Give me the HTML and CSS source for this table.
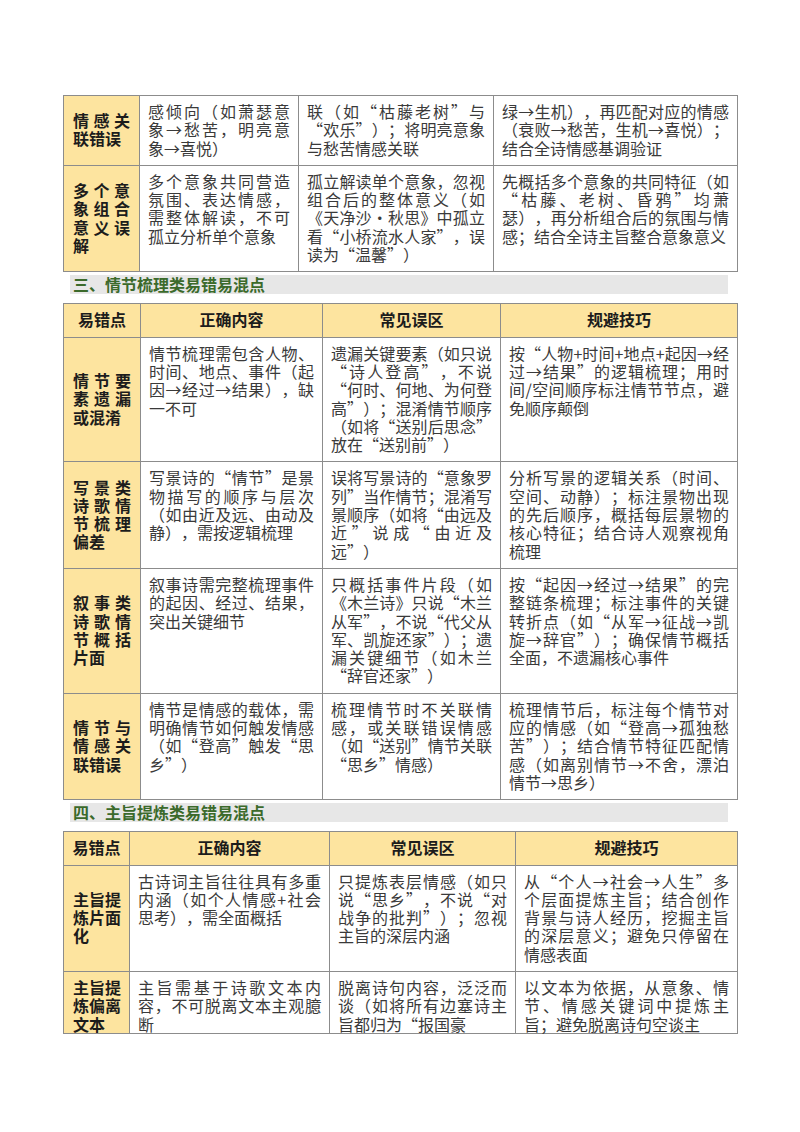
FILE: index.html
```html
<!DOCTYPE html>
<html lang="zh-CN">
<head>
<meta charset="utf-8">
<title>易错易混点</title>
<link rel="stylesheet" href="styles.css">
</head>
<body>
<div class="page">
  <table class="grid t1">
    <colgroup><col class="a"><col class="b"><col class="c"><col class="d"></colgroup>
    <tr class="r1">
      <th class="key">情感关联错误</th>
      <td>感倾向（如萧瑟意象→愁苦，明亮意象→喜悦）</td>
      <td>联（如“枯藤老树”与“欢乐”）；将明亮意象与愁苦情感关联</td>
      <td>绿→生机），再匹配对应的情感（衰败→愁苦，生机→喜悦）；结合全诗情感基调验证</td>
    </tr>
    <tr>
      <th class="key">多个意象组合意义误解</th>
      <td>多个意象共同营造氛围、表达情感，需整体解读，不可孤立分析单个意象</td>
      <td>孤立解读单个意象，忽视组合后的整体意义（如《天净沙·秋思》中孤立看“小桥流水人家”，误读为“温馨”）</td>
      <td>先概括多个意象的共同特征（如“枯藤、老树、昏鸦”均萧瑟），再分析组合后的氛围与情感；结合全诗主旨整合意象意义</td>
    </tr>
  </table>

  <h2 class="sec">三、情节梳理类易错易混点</h2>

  <table class="grid t2">
    <colgroup><col class="a"><col class="b"><col class="c"><col class="d"></colgroup>
    <tr class="head">
      <th>易错点</th><th>正确内容</th><th>常见误区</th><th>规避技巧</th>
    </tr>
    <tr>
      <th class="key">情节要素遗漏或混淆</th>
      <td>情节梳理需包含人物、时间、地点、事件（起因→经过→结果），缺一不可</td>
      <td>遗漏关键要素（如只说“诗人登高”，不说“何时、何地、为何登高”）；混淆情节顺序（如将“送别后思念”放在“送别前”）</td>
      <td>按“人物+时间+地点+起因→经过→结果”的逻辑梳理；用时间/空间顺序标注情节节点，避免顺序颠倒</td>
    </tr>
    <tr>
      <th class="key">写景类诗歌情节梳理偏差</th>
      <td>写景诗的“情节”是景物描写的顺序与层次（如由近及远、由动及静），需按逻辑梳理</td>
      <td>误将写景诗的“意象罗列”当作情节；混淆写景顺序（如将“由远及近”说成“由近及远”）</td>
      <td>分析写景的逻辑关系（时间、空间、动静）；标注景物出现的先后顺序，概括每层景物的核心特征；结合诗人观察视角梳理</td>
    </tr>
    <tr>
      <th class="key">叙事类诗歌情节概括片面</th>
      <td>叙事诗需完整梳理事件的起因、经过、结果，突出关键细节</td>
      <td>只概括事件片段（如《木兰诗》只说“木兰从军”，不说“代父从军、凯旋还家”）；遗漏关键细节（如木兰“辞官还家”）</td>
      <td>按“起因→经过→结果”的完整链条梳理；标注事件的关键转折点（如“从军→征战→凯旋→辞官”）；确保情节概括全面，不遗漏核心事件</td>
    </tr>
    <tr>
      <th class="key">情节与情感关联错误</th>
      <td>情节是情感的载体，需明确情节如何触发情感（如“登高”触发“思乡”）</td>
      <td>梳理情节时不关联情感，或关联错误情感（如“送别”情节关联“思乡”情感）</td>
      <td>梳理情节后，标注每个情节对应的情感（如“登高→孤独愁苦”）；结合情节特征匹配情感（如离别情节→不舍，漂泊情节→思乡）</td>
    </tr>
  </table>

  <h2 class="sec">四、主旨提炼类易错易混点</h2>

  <table class="grid t3">
    <colgroup><col class="a"><col class="b"><col class="c"><col class="d"></colgroup>
    <tr class="head">
      <th>易错点</th><th>正确内容</th><th>常见误区</th><th>规避技巧</th>
    </tr>
    <tr>
      <th class="key">主旨提炼片面化</th>
      <td>古诗词主旨往往具有多重内涵（如个人情感+社会思考），需全面概括</td>
      <td>只提炼表层情感（如只说“思乡”，不说“对战争的批判”）；忽视主旨的深层内涵</td>
      <td>从“个人→社会→人生”多个层面提炼主旨；结合创作背景与诗人经历，挖掘主旨的深层意义；避免只停留在情感表面</td>
    </tr>
    <tr class="cut">
      <th class="key">主旨提炼偏离文本</th>
      <td>主旨需基于诗歌文本内容，不可脱离文本主观臆断</td>
      <td>脱离诗句内容，泛泛而谈（如将所有边塞诗主旨都归为“报国豪</td>
      <td>以文本为依据，从意象、情节、情感关键词中提炼主旨；避免脱离诗句空谈主</td>
    </tr>
  </table>
</div>
</body>
</html>
```

FILE: styles.css
```css
html, body {
  margin: 0;
  padding: 0;
  background: #ffffff;
}

.page {
  padding: 95px 0 0 63px;
  width: 674px;
  font-family: "Noto Sans CJK SC", "Noto Sans", sans-serif;
  text-spacing-trim: space-all;
}

.grid {
  width: 674px;
  table-layout: fixed;
  border-collapse: collapse;
}

.grid th,
.grid td {
  border: 1px solid #8c8c8c;
  font-size: 16px;
  line-height: 18.3px;
  padding: 6px 8px 8px 8px;
  vertical-align: top;
  text-align: justify;
  color: #3a3a3a;
  font-weight: 400;
  text-spacing-trim: space-all;
}

.grid th.key {
  background: #fde49f;
  color: #1c1c1c;
  font-weight: 700;
  vertical-align: middle;
  padding-left: 9px;
  padding-right: 9px;
}

.grid tr.head th {
  background: #fde49f;
  color: #1c1c1c;
  font-weight: 700;
  text-align: center;
  vertical-align: middle;
}

.grid tr.cut th,
.grid tr.cut td {
  padding-bottom: 0;
}

.t1 .a { width: 76px; }
.t1 .b { width: 159px; }
.t1 .c { width: 195px; }
.t1 .d { width: 244px; }

.t2 .a { width: 77px; }
.t2 .b { width: 182px; }
.t2 .c { width: 178px; }
.t2 .d { width: 237px; }

.t3 .a { width: 66px; }
.t3 .b { width: 200px; }
.t3 .c { width: 186px; }
.t3 .d { width: 222px; }

.t3 th.key {
  padding-left: 9px;
  padding-right: 8px;
}

.sec {
  margin: 3px 9px 9px 7px;
  height: 19px;
  padding-left: 3px;
  background: #e7e7e7;
  color: #3b6a2b;
  font-size: 16px;
  line-height: 19px;
  font-weight: 700;
}
```
